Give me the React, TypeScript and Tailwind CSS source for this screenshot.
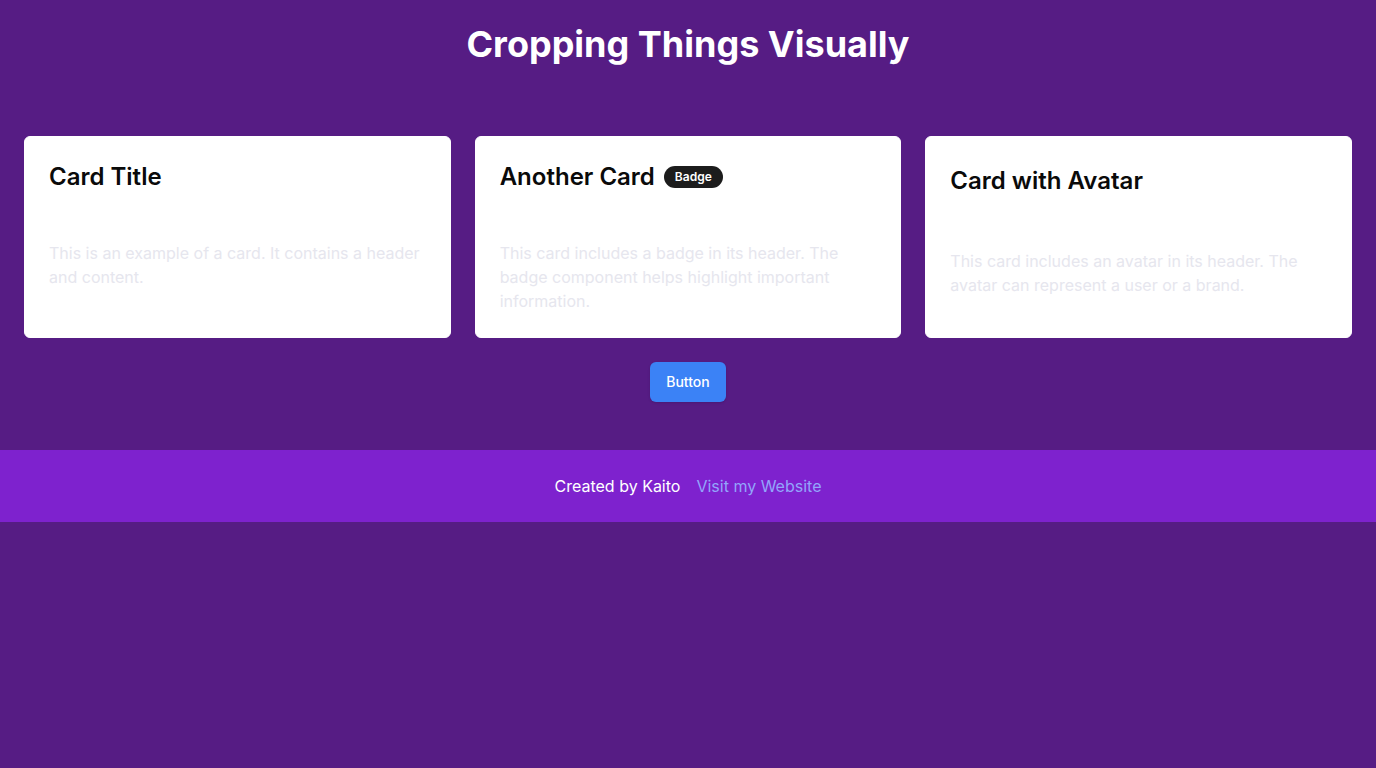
import React from 'react';

interface CardProps {
  title: string;
  text: string;
  badge?: string;
  avatar?: boolean;
}

const Card: React.FC<CardProps> = ({ title, text, badge, avatar = false }) => {
  return (
    <div className="bg-white border border-white rounded-md p-6">
      <div className={`flex items-center gap-[9px] ${avatar ? 'h-10' : 'h-8'}`}>
        <h3 className="text-2xl leading-8 font-semibold text-[#0a0a0a]">{title}</h3>
        {badge && (
          <span className="bg-[#1c1c1c] text-white text-xs font-semibold rounded-full px-[11px] py-[3px] leading-4">
            {badge}
          </span>
        )}
      </div>
      <p className="mt-12 text-base leading-6 text-[#e6e6ee]">{text}</p>
    </div>
  );
};

const App: React.FC = () => {
  const cards = [
    { title: 'Card Title', text: 'This is an example of a card. It contains a header and content.' },
    {
      title: 'Another Card',
      badge: 'Badge',
      text: 'This card includes a badge in its header. The badge component helps highlight important information.',
    },
    {
      title: 'Card with Avatar',
      avatar: true,
      text: 'This card includes an avatar in its header. The avatar can represent a user or a brand.',
    },
  ];

  return (
    <div className="min-h-screen bg-[#561c84] font-['Inter',sans-serif]">
      <main className="px-6 pt-6 pb-12">
        <h1 className="text-4xl leading-10 font-bold text-white text-center">Cropping Things Visually</h1>
        <div className="grid grid-cols-3 gap-6 mt-[72px]">
          {cards.map((c) => (
            <Card key={c.title} {...c} />
          ))}
        </div>
        <div className="flex justify-center mt-6">
          <button className="h-10 px-4 rounded-md bg-[#3b82f6] text-white text-sm font-medium shadow-sm">
            Button
          </button>
        </div>
      </main>
      <footer className="bg-[#7e22ce] h-[72px] flex items-center justify-center gap-4 text-base">
        <span className="text-white">Created by Kaito</span>
        <a href="#" className="text-[#93a5fb]">Visit my Website</a>
      </footer>
    </div>
  );
};

export default App;
